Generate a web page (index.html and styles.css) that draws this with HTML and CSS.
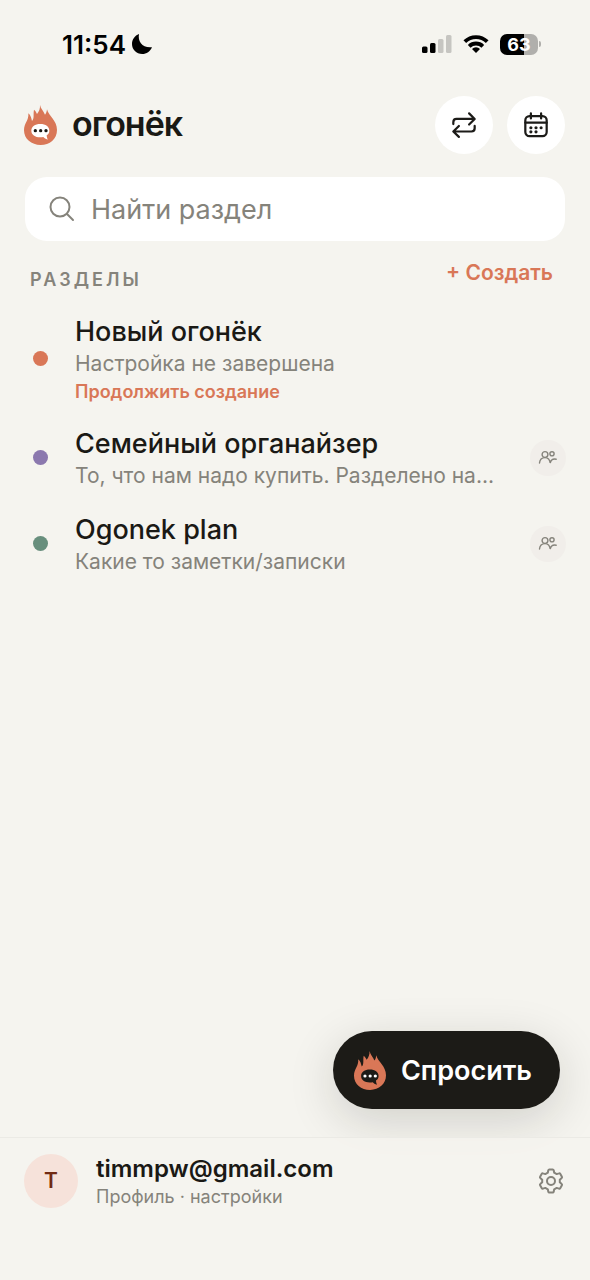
FILE: index.html
```html
<!DOCTYPE html>
<html lang="ru">
<head>
<meta charset="utf-8">
<meta name="viewport" content="width=device-width, initial-scale=1">
<title>огонёк</title>
<link rel="stylesheet" href="styles.css">
</head>
<body>
<svg class="defs" aria-hidden="true">
  <symbol id="flame" viewBox="0 0 99 120">
    <path fill="#d97757" d="M48 0C50 11 60 20 63 29C67 25 68 20 69 13C74 34 99 46 99 75C99 102 77 120 50 120C22 120 0 102 0 76C0 54 15 47 13 25C20 30 22 40 24 48C32 40 27 28 30 14C35 18 37 22 39 27C45 20 49 11 48 0Z"/>
    <path fill="currentColor" d="M49 57C65 57 76 65 76 77C76 83 73 88 68 91C68 95 69 99 71 104C65 102 61 99 58 96C55 97 52 97 49 97C33 97 22 89 22 77C22 65 33 57 49 57Z"/>
    <g><circle cx="34" cy="77" r="5"/><circle cx="50" cy="77" r="5"/><circle cx="66" cy="77" r="5"/></g>
  </symbol>
  <symbol id="people" viewBox="0 0 20 16">
    <g fill="none" stroke="currentColor" stroke-width="1.4" stroke-linecap="round">
      <circle cx="7" cy="4.500" r="2.900"/><circle cx="14" cy="3.800" r="2.100"/>
      <path d="M1.500 13C1.800 9.500 4 7.600 7 7.600C9.800 7.600 11.800 9.600 12.200 13C12.800 10.200 15 8.600 18.200 9.200"/>
    </g>
  </symbol>
</svg>
<div class="app">
  <div class="status">
    <div class="status-group">
      <span class="time">11:54</span>
      <svg width="22" height="22" viewBox="0 0 22 22"><path d="M8 1C6.500 8.500 11.500 15.300 21 14.200C19.200 18.400 15.600 21 11.200 21C5.400 21 1 16.600 1 11C1 6.500 3.800 2.500 8 1Z"/></svg>
    </div>
    <div class="status-group status-right">
      <svg width="30" height="20" viewBox="0 0 30 20"><rect x="0" y="12.500" width="5.500" height="6.500" rx="1.500"/><rect x="8" y="9" width="5.500" height="10" rx="1.500"/><g fill="#c6c5c1"><rect x="16" y="5" width="5.500" height="14" rx="1.500"/><rect x="24" y="1" width="5.500" height="18" rx="1.500"/></g></svg>
      <svg width="26" height="20" viewBox="0 0 26 20"><g fill="none" stroke="#000" stroke-width="3.800"><path d="M1.800 7.700A16 16 0 0 1 24.200 7.700"/><path d="M6.200 12.300A9.700 9.700 0 0 1 19.800 12.300"/></g><path d="M13 19L9 15A5.700 5.700 0 0 1 17 15Z"/></svg>
      <span class="battery"><span class="battery-body">63</span><span class="battery-tip"></span></span>
    </div>
  </div>

  <header class="header">
    <div class="brand">
      <svg class="brand-flame" width="33" height="40"><use href="#flame"/></svg>
      <h1>огонёк</h1>
    </div>
    <div class="actions">
      <button class="round" aria-label="Обновить">
        <svg width="26" height="28" viewBox="0 0 28 28"><g fill="none" stroke="#1c1b18" stroke-width="2.400" stroke-linecap="round" stroke-linejoin="round"><path d="M2.500 13V11Q2.500 7.500 6 7.500H25M19.500 1.500L25.500 7.500L19.500 13.500M25.500 15V17.500Q25.500 21 22 21H3M8.500 15L2.500 21L8.500 26.800"/></g></svg>
      </button>
      <button class="round" aria-label="Календарь">
        <svg width="26" height="28" viewBox="0 0 28 28"><g fill="none" stroke="#1c1b18" stroke-width="2.400" stroke-linecap="round"><rect x="2.500" y="4.500" width="23" height="21.500" rx="4.500"/><path d="M2.500 11.500H25.500M8.500 1.500V7M19.500 1.500V7"/></g><g fill="#1c1b18"><circle cx="8.500" cy="17" r="1.700"/><circle cx="14" cy="17" r="1.700"/><circle cx="19.500" cy="17" r="1.700"/><circle cx="8.500" cy="21.400" r="1.700"/><circle cx="14" cy="21.400" r="1.700"/></g></svg>
      </button>
    </div>
  </header>

  <label class="search">
    <svg width="26" height="26" viewBox="0 0 26 26" fill="none" stroke="#85837b" stroke-width="2" stroke-linecap="round"><circle cx="11" cy="11" r="9.500"/><path d="M18 18L24 24"/></svg>
    <input type="search" placeholder="Найти раздел" aria-label="Найти раздел">
  </label>

  <main class="main">
    <div class="section-head">
      <h2>РАЗДЕЛЫ</h2>
      <button class="create">+ Создать</button>
    </div>
    <ul class="list">
      <li class="row">
        <span class="dot dot-orange"></span>
        <div class="row-text">
          <h3>Новый огонёк</h3>
          <p>Настройка не завершена</p>
          <a class="continue" href="#">Продолжить создание</a>
        </div>
      </li>
      <li class="row">
        <span class="dot dot-purple"></span>
        <div class="row-text">
          <h3>Семейный органайзер</h3>
          <p>То, что нам надо купить. Разделено на...</p>
        </div>
        <span class="shared"><svg width="20" height="16"><use href="#people"/></svg></span>
      </li>
      <li class="row">
        <span class="dot dot-green"></span>
        <div class="row-text">
          <h3>Ogonek plan</h3>
          <p>Какие то заметки/записки</p>
        </div>
        <span class="shared"><svg width="20" height="16"><use href="#people"/></svg></span>
      </li>
    </ul>
    <button class="ask">
      <svg class="ask-flame" width="32" height="39"><use href="#flame"/></svg>
      Спросить
    </button>
  </main>

  <footer class="profile">
    <span class="avatar">T</span>
    <div class="profile-text">
      <strong>timmpw@gmail.com</strong>
      <span>Профиль · настройки</span>
    </div>
    <button class="settings" aria-label="Настройки">
      <svg width="26" height="26" viewBox="0 0 26 26" fill="none" stroke="#85837b" stroke-width="2" stroke-linejoin="round"><circle cx="13" cy="13" r="4"/><path d="M11.300 1.500H14.700Q15.500 1.500 15.700 2.300L16.200 4.700L18.700 6.100L21 5.400Q21.800 5.100 22.200 5.800L23.900 8.800Q24.300 9.500 23.700 10L21.800 11.700V14.300L23.700 16Q24.300 16.500 23.900 17.200L22.200 20.200Q21.800 20.900 21 20.600L18.700 19.900L16.200 21.300L15.700 23.700Q15.500 24.500 14.700 24.500H11.300Q10.500 24.500 10.300 23.700L9.800 21.300L7.300 19.900L5 20.600Q4.200 20.900 3.800 20.200L2.100 17.200Q1.700 16.500 2.300 16L4.200 14.300V11.700L2.300 10Q1.700 9.500 2.100 8.800L3.800 5.800Q4.200 5.100 5 5.400L7.300 6.100L9.800 4.700L10.300 2.300Q10.500 1.500 11.300 1.500Z"/></svg>
    </button>
  </footer>
</div>
</body>
</html>
```
FILE: styles.css
```css
* { box-sizing: border-box; }
body {
  margin: 0;
  background: #f5f4ef;
  color: #1a1915;
  font-family: Inter, "Noto Sans", sans-serif;
}
h1, h2, h3, p, ul { margin: 0; padding: 0; }
button { border: 0; padding: 0; background: none; color: inherit; font: inherit; cursor: pointer; }
svg { display: block; flex: none; }
.defs { position: absolute; width: 0; height: 0; }
.app { min-height: 100vh; display: flex; flex-direction: column; }

.status {
  display: flex;
  justify-content: space-between;
  align-items: center;
  height: 88px;
  padding: 0 49px 0 62px;
  color: #000;
}
.status-group { display: flex; align-items: center; gap: 5px; }
.status-right { gap: 11px; }
.time { font-size: 26px; font-weight: 600; }
.battery { display: flex; align-items: center; gap: 1px; }
.battery-body {
  width: 38px;
  height: 21px;
  border-radius: 7px;
  background: linear-gradient(90deg, #000 63%, #b0afac 63%);
  color: #fff;
  font-size: 18px;
  font-weight: 700;
  line-height: 21px;
  text-align: center;
}
.battery-tip { width: 2px; height: 6px; border-radius: 0 2px 2px 0; background: #b0afac; }

.header {
  display: flex;
  justify-content: space-between;
  align-items: center;
  padding: 8px 25px 0 24px;
}
.brand { display: flex; align-items: center; gap: 15px; }
.brand-flame { color: #fff; fill: #1a1915; }
.brand h1 { padding-bottom: 3px; font-size: 34px; font-weight: 600; line-height: 40px; letter-spacing: -1px; }
.actions { display: flex; gap: 14px; }
.round {
  display: flex;
  align-items: center;
  justify-content: center;
  width: 58px;
  height: 58px;
  border-radius: 50%;
  background: #fff;
}

.search {
  display: flex;
  align-items: center;
  gap: 16px;
  height: 64px;
  margin: 23px 25px 0;
  padding: 0 24px;
  border-radius: 22px;
  background: #fff;
}
.search input {
  flex: 1;
  min-width: 0;
  padding: 0;
  border: 0;
  outline: 0;
  background: none;
  font: inherit;
  font-size: 27px;
}
.search input::placeholder { color: #85837b; opacity: 1; }

.main { position: relative; flex: 1; }
.section-head {
  display: flex;
  justify-content: space-between;
  align-items: flex-start;
  height: 61px;
  padding: 19px 37px 0 30px;
}
.section-head h2 {
  padding-top: 7px;
  color: #85837b;
  font-size: 18px;
  font-weight: 600;
  line-height: 26px;
  letter-spacing: 3px;
}
.create { color: #d97757; font-size: 21px; font-weight: 600; line-height: 26px; }

.list { list-style: none; }
.row { display: flex; align-items: center; padding: 10px 24px 9px 33px; }
.dot { width: 15px; height: 15px; flex: none; border-radius: 50%; }
.dot-orange { background: #d97757; }
.dot-purple { background: #8b78ae; }
.dot-green { background: #688f7d; }
.row-text { flex: 1; min-width: 0; margin-left: 27px; padding-top: 3px; }
.row-text h3 { font-size: 27px; font-weight: 500; line-height: 34px; }
.row-text p { color: #85837b; font-size: 21px; line-height: 30px; }
.continue {
  display: block;
  color: #d97757;
  font-size: 18px;
  font-weight: 600;
  line-height: 26px;
  text-decoration: none;
}
.shared {
  display: flex;
  align-items: center;
  justify-content: center;
  width: 36px;
  height: 36px;
  border-radius: 50%;
  background: #f1eeea;
  color: #85837b;
}

.ask {
  position: absolute;
  right: 30px;
  bottom: 28px;
  display: flex;
  align-items: center;
  gap: 15px;
  height: 78px;
  padding: 0 28px 0 21px;
  border-radius: 39px;
  background: #1c1b17;
  color: #fff;
  font-size: 27px;
  font-weight: 600;
  box-shadow: 0 12px 48px rgba(26, 25, 21, 0.16);
}
.ask-flame { color: #1c1b17; fill: #fff; }

.profile {
  position: relative;
  display: flex;
  align-items: center;
  gap: 18px;
  padding: 13px 26px 70px 24px;
  border-top: 1px solid #ebeae5;
  background: rgba(245, 244, 239, 0.8);
}
.avatar {
  display: flex;
  align-items: center;
  justify-content: center;
  width: 54px;
  height: 54px;
  border-radius: 50%;
  background: #f6e2da;
  color: #712b13;
  font-size: 21px;
  font-weight: 600;
}
.profile-text { display: flex; flex: 1; flex-direction: column; padding-top: 3px; }
.profile-text strong { font-size: 24px; font-weight: 600; line-height: 30px; }
.profile-text span { color: #85837b; font-size: 18px; line-height: 26px; }
```
